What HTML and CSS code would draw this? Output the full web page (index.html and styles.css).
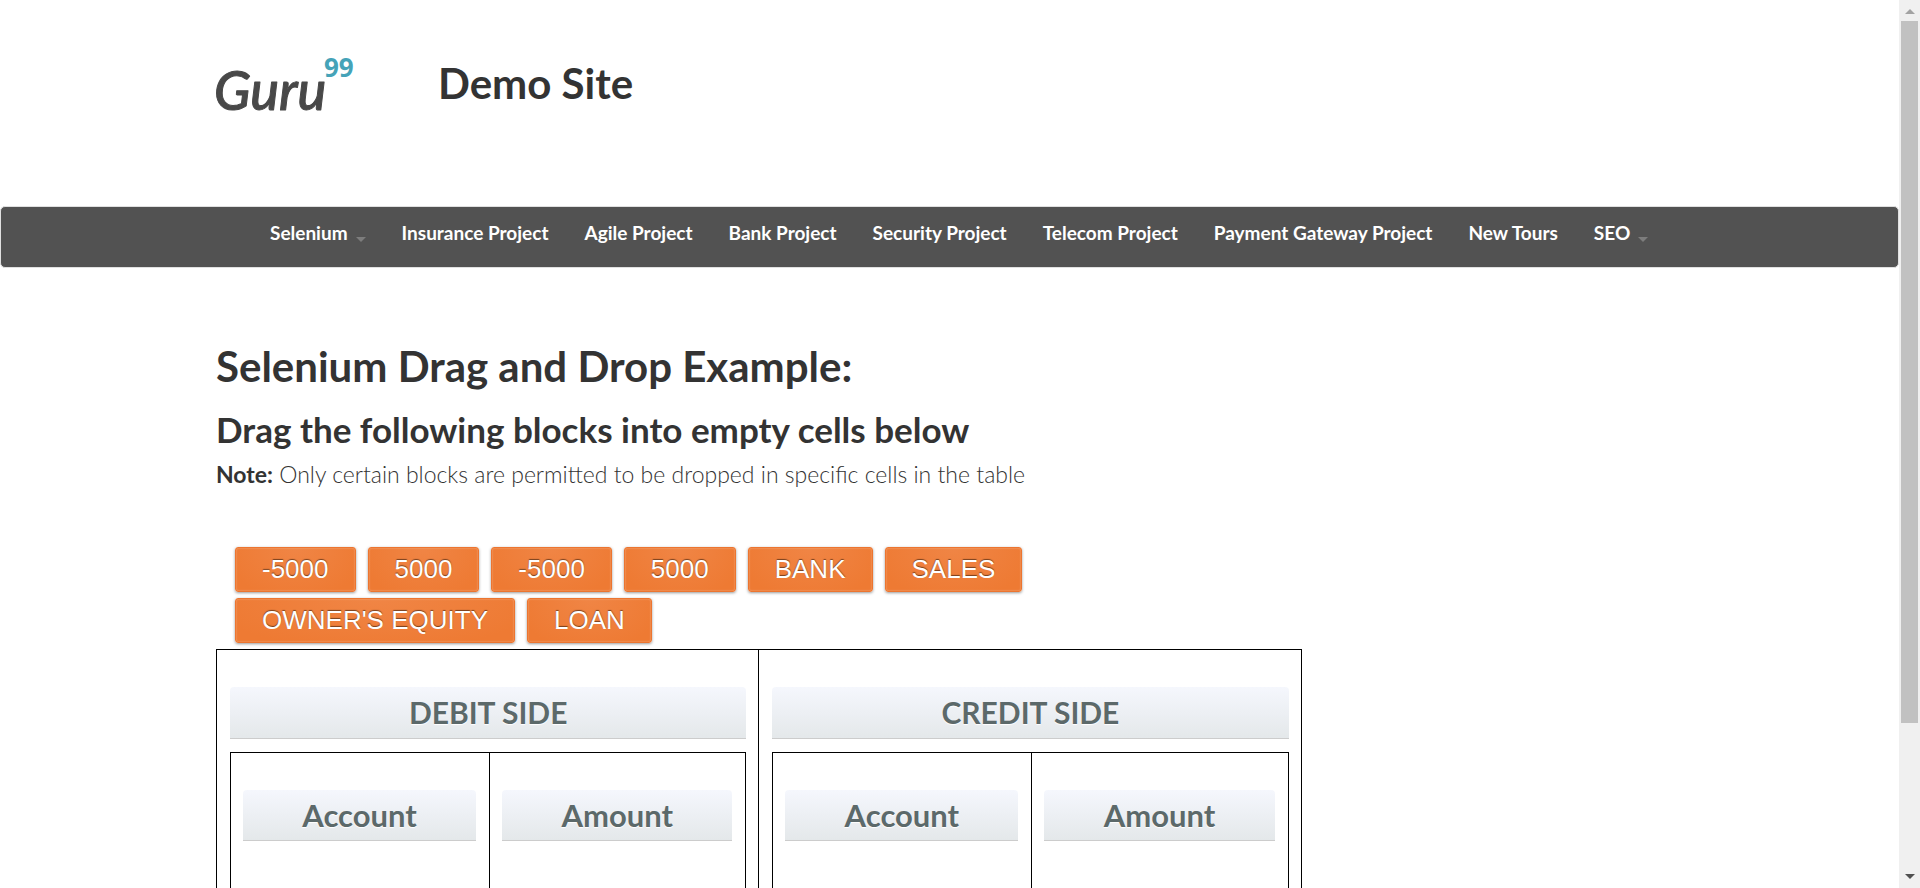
FILE: index.html
```html
<!DOCTYPE html>
<html lang="en">
<head>
<meta charset="utf-8">
<title>Guru99 Demo Site</title>
<link rel="stylesheet" href="styles.css">
</head>
<body>
<div class="window">
  <div class="page">
    <header class="container header">
      <a class="logo" href="#" aria-label="Guru99"><svg width="164" height="100" viewBox="0 0 164 100"><text class="logo-word" x="2" y="74">Guru</text><text class="logo-num" x="112" y="41">99</text></svg></a>
      <h2 class="site-title">Demo Site</h2>
    </header>
    <nav class="navbar">
      <ul class="container menu">
        <li><a href="#">Selenium<span class="caret"></span></a></li>
        <li><a href="#">Insurance Project</a></li>
        <li><a href="#">Agile Project</a></li>
        <li><a href="#">Bank Project</a></li>
        <li><a href="#">Security Project</a></li>
        <li><a href="#">Telecom Project</a></li>
        <li><a href="#">Payment Gateway Project</a></li>
        <li><a href="#">New Tours</a></li>
        <li><a href="#">SEO<span class="caret"></span></a></li>
      </ul>
    </nav>
    <main class="container main">
      <h1>Selenium Drag and Drop Example:</h1>
      <h2>Drag the following blocks into empty cells below</h2>
      <p class="note"><strong>Note:</strong> Only certain blocks are permitted to be dropped in specific cells in the table</p>
      <ul class="blocks">
        <li><a class="block" href="#">-5000</a></li>
        <li><a class="block" href="#">5000</a></li>
        <li><a class="block" href="#">-5000</a></li>
        <li><a class="block" href="#">5000</a></li>
        <li><a class="block" href="#">BANK</a></li>
        <li><a class="block" href="#">SALES</a></li>
        <li><a class="block" href="#">OWNER'S EQUITY</a></li>
        <li><a class="block" href="#">LOAN</a></li>
      </ul>
      <table class="ledger">
        <tr>
          <td>
            <h3 class="bar bar-title">DEBIT SIDE</h3>
            <table class="side">
              <tr><th><div class="bar">Account</div></th><th><div class="bar">Amount</div></th></tr>
            </table>
          </td>
          <td>
            <h3 class="bar bar-title">CREDIT SIDE</h3>
            <table class="side">
              <tr><th><div class="bar">Account</div></th><th><div class="bar">Amount</div></th></tr>
            </table>
          </td>
        </tr>
      </table>
    </main>
  </div>
  <div class="scrollbar" aria-hidden="true">
    <span class="arrow up"></span>
    <span class="thumb"></span>
    <span class="arrow down"></span>
  </div>
</div>
</body>
</html>
```
FILE: styles.css
```css
* { box-sizing: border-box; }
body {
  margin: 0;
  background: #fff;
  color: #333;
  font-family: Lato, "Open Sans", sans-serif;
}
h1, h2, h3, p, ul { margin: 0; padding: 0; }
ul { list-style: none; }
a { color: inherit; text-decoration: none; }

.window { display: flex; height: 100vh; overflow: hidden; }
.page { flex: 1; min-width: 0; overflow: hidden; }
.container { width: 78%; max-width: 1467px; margin: 0 auto; }

.header {
  display: flex;
  align-items: flex-start;
  gap: 62px;
  height: 206px;
  padding-top: 36px;
}
.logo { display: block; line-height: 0; margin-left: -4px; }
.logo-word {
  font: italic 500 54px Lato, sans-serif;
  fill: #484848;
  stroke: #484848;
  stroke-width: 1;
  stroke-linejoin: round;
}
.logo-num { font: 700 26px "Open Sans", sans-serif; fill: #45a3b8; }
.site-title { font-size: 42px; line-height: 56px; font-weight: 700; margin-top: 19px; }

.navbar {
  height: 62px;
  background: #525252;
  border: 1px solid #e0e0e0;
  border-radius: 5px;
}
.menu {
  display: flex;
  gap: 36px;
  padding: 14px 0 0 54px;
  color: #fff;
  font-size: 19px;
  line-height: 24px;
  font-weight: 700;
  white-space: nowrap;
}
.menu a { display: flex; align-items: flex-end; gap: 8px; }
.caret {
  border: 5px solid transparent;
  border-top-color: #7d7d7d;
  border-bottom: 0;
  margin-bottom: 3px;
}

.main { padding-top: 73px; }
.main h1 { font-size: 42px; line-height: 50px; font-weight: 700; }
.main h2 { font-size: 35px; line-height: 40px; margin-top: 18px; }
.note { font-size: 23px; line-height: 28px; font-weight: 300; margin-top: 11px; }
.note strong { font-weight: 700; }

.blocks {
  display: flex;
  flex-wrap: wrap;
  gap: 6px 12px;
  width: 820px;
  padding-left: 19px;
  margin-top: 59px;
}
.block {
  display: block;
  padding: 0 26px;
  border: 1px solid #ec7530;
  border-radius: 3px;
  background: radial-gradient(ellipse at 50% 0, #f08545, #ee7a33 85%);
  box-shadow: inset 0 0 2px rgba(255, 255, 255, .4), 0 1px 3px rgba(0, 0, 0, .4);
  color: #fff;
  font: 26px/43px "Liberation Sans", Arial, sans-serif;
  text-shadow: 0 -1px 1px rgba(0, 0, 0, .5);
}

table { border-collapse: collapse; table-layout: fixed; }
.ledger { width: 74%; margin-top: 6px; }
.ledger td { border: 1px solid #000; vertical-align: top; padding: 37px 12px 12px 13px; }
.side { width: 100%; margin-top: 13px; }
.side th { border: 1px solid #000; vertical-align: top; height: 400px; padding: 37px 13px 12px 12px; }
.side th:first-child { width: 50.3%; }
.bar {
  border-bottom: 1px solid #ccc;
  border-radius: 4px 4px 0 0;
  background: linear-gradient(#f5f7fd, #e4e8ea);
  color: #5c696a;
  font-size: 31px;
  line-height: 50px;
  font-weight: 700;
  text-align: center;
  text-shadow: 0 1px 1px #fff;
}
.bar-title { font-size: 30px; line-height: 51px; }

.scrollbar {
  display: flex;
  flex-direction: column;
  align-items: center;
  width: 21px;
  background: #f0f0f0;
}
.thumb { width: 17px; height: 79%; background: #c1c1c1; }
.arrow { width: 10px; border: 5px solid transparent; }
.up { border-top: 0; border-bottom-color: #a3a3a3; margin: 9px 0 7px; }
.down { border-bottom: 0; border-top-color: #505050; margin: auto 0 9px; }
```
